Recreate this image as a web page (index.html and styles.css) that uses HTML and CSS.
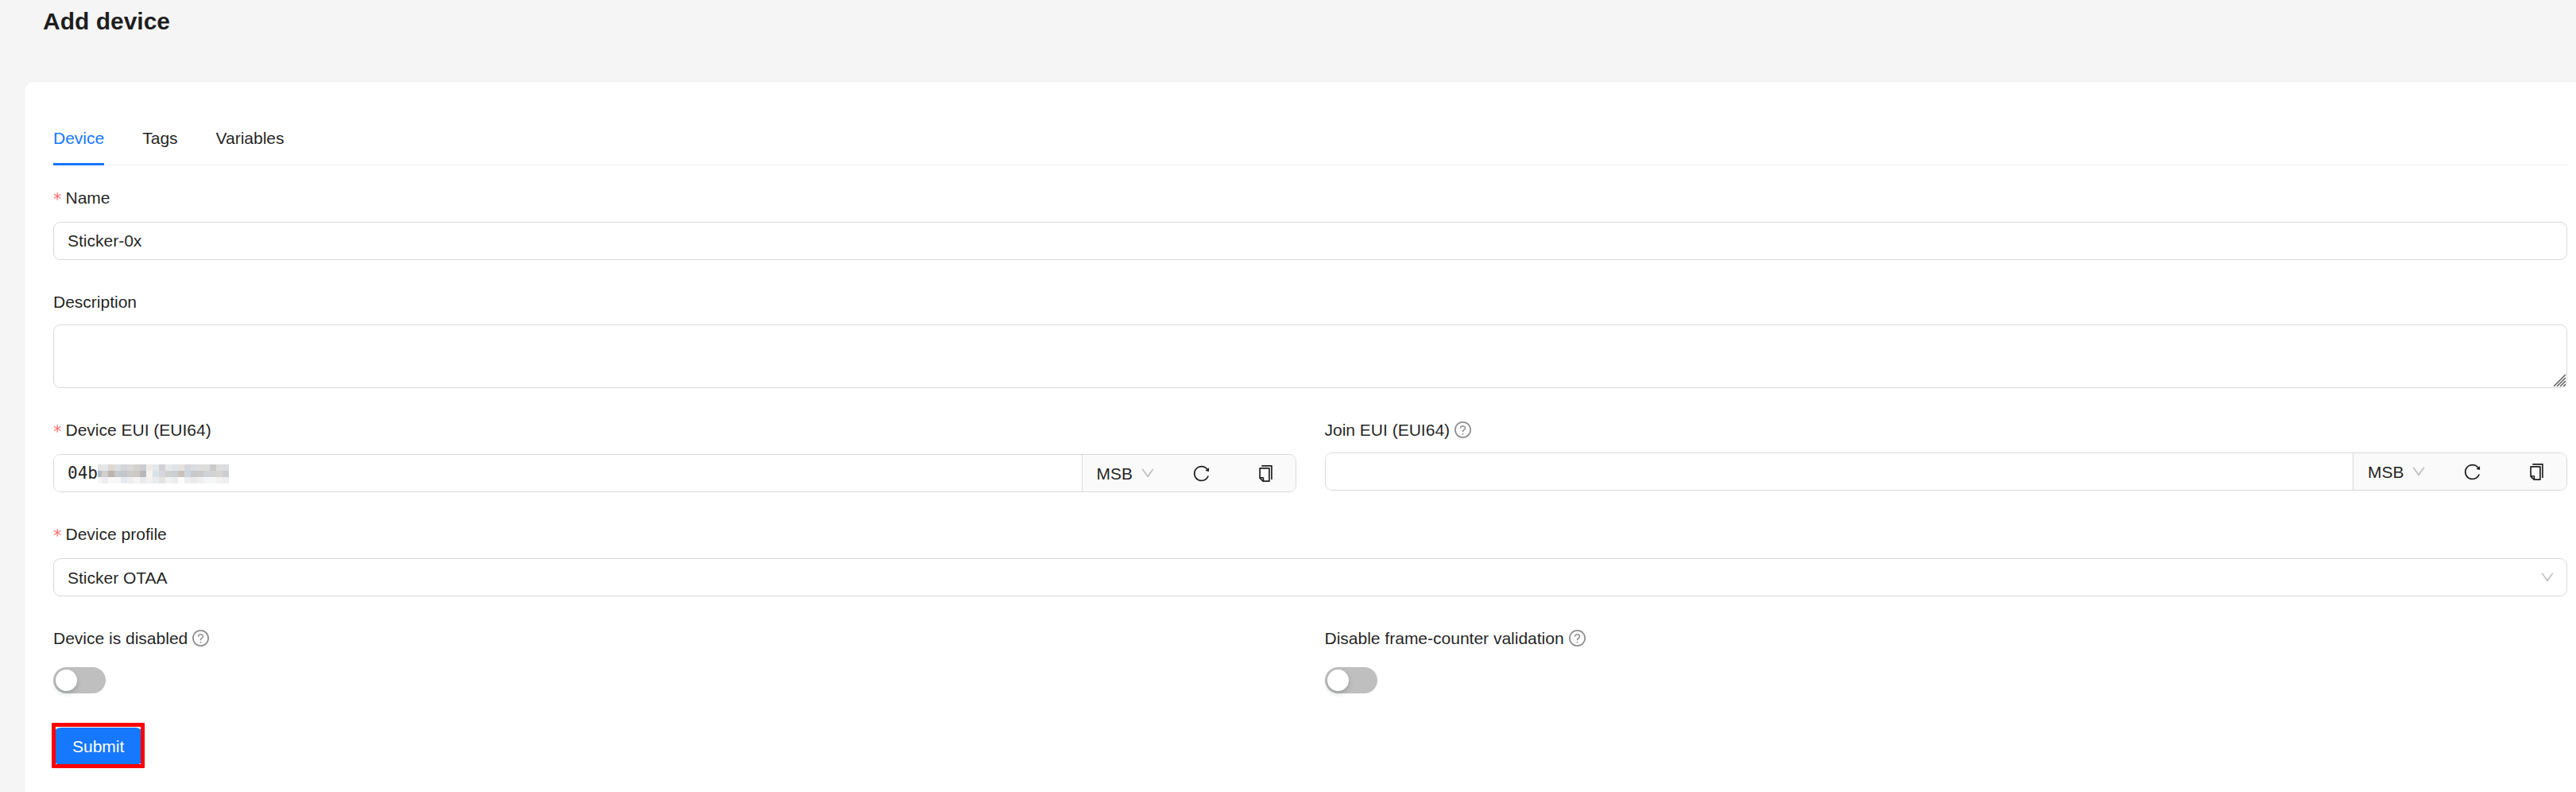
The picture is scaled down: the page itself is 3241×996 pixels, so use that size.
FILE: index.html
```
<!DOCTYPE html>
<html lang="en">
<head>
  <meta charset="UTF-8">
  <meta name="viewport" content="width=device-width, initial-scale=1.0">
  <title>Add device</title>
  <link rel="stylesheet" href="styles.css">
</head>
<body>

  <!-- shared icons -->
  <svg class="sprite" aria-hidden="true">
    <symbol id="icon-question" viewBox="64 64 896 896">
      <path d="M512 64C264.600 64 64 264.600 64 512s200.600 448 448 448 448-200.600 448-448S759.400 64 512 64zm0 820c-205.400 0-372-166.600-372-372s166.600-372 372-372 372 166.600 372 372-166.600 372-372 372z"/>
      <path d="M623.600 316.700C593.600 290.400 554 276 512 276s-81.600 14.500-111.600 40.700C369.200 344 352 380.700 352 420v7.600c0 4.400 3.600 8 8 8h48c4.400 0 8-3.600 8-8V420c0-44.100 43.100-80 96-80s96 35.900 96 80c0 31.100-22 59.600-56.100 72.700-21.200 8.100-39.200 22.300-52.100 40.900-13.100 19-19.900 41.800-19.900 64.900V620c0 4.400 3.600 8 8 8h48c4.400 0 8-3.600 8-8v-22.700a48.300 48.300 0 0 1 30.900-44.800c59-22.700 97.100-74.700 97.100-132.500.1-39.300-17.100-76-48.300-103.300zM472 732a40 40 0 1 0 80 0 40 40 0 1 0-80 0z"/>
    </symbol>
    <symbol id="icon-down" viewBox="64 64 896 896">
      <path d="M884 256h-75c-5.100 0-9.900 2.500-12.900 6.600L512 654.200 227.900 262.600c-3-4.100-7.800-6.600-12.900-6.600h-75c-6.500 0-10.300 7.400-6.500 12.700l352.600 486.100c12.800 17.600 39 17.600 51.700 0l352.600-486.100c3.900-5.300.1-12.700-6.400-12.700z"/>
    </symbol>
    <symbol id="icon-reload" viewBox="64 64 896 896">
      <path d="M909.100 209.300l-56.400 44.100C775.800 155.100 656.200 92 521.900 92 290 92 102.300 279.500 102 511.500 101.700 743.700 289.800 932 521.900 932c181.300 0 335.800-115 394.600-276.100 1.500-4.200-.7-8.900-4.900-10.300l-56.700-19.500a8 8 0 0 0-10.100 4.800c-1.800 5-3.800 10-5.900 14.900-17.300 41-42.100 77.800-73.700 109.400A344.770 344.770 0 0 1 655.900 829c-42.300 17.900-87.400 27-133.800 27-46.500 0-91.500-9.100-133.800-27A341.500 341.500 0 0 1 279 755.200a342.160 342.160 0 0 1-73.700-109.400c-17.900-42.400-27-87.400-27-133.900s9.100-91.500 27-133.900c17.300-41 42.100-77.800 73.700-109.400 31.600-31.600 68.400-56.400 109.300-73.800 42.300-17.900 87.400-27 133.800-27 46.500 0 91.500 9.100 133.800 27a341.500 341.500 0 0 1 109.300 73.800c9.900 9.900 19.200 20.400 27.800 31.400l-60.200 47a8 8 0 0 0 3 14.100l175.600 43c5 1.200 9.900-2.600 9.900-7.700l.8-180.900c-.1-6.600-7.800-10.300-13-6.200z"/>
    </symbol>
    <symbol id="icon-copy" viewBox="64 64 896 896">
      <path d="M832 64H296c-4.400 0-8 3.600-8 8v56c0 4.400 3.600 8 8 8h496v688c0 4.400 3.600 8 8 8h56c4.400 0 8-3.600 8-8V96c0-17.700-14.300-32-32-32zM704 192H192c-17.700 0-32 14.300-32 32v530.700c0 8.500 3.400 16.600 9.400 22.600l173.300 173.300c2.200 2.200 4.700 4 7.400 5.500v1.900h4.200c3.500 1.300 7.200 2 11 2H704c17.700 0 32-14.300 32-32V224c0-17.700-14.300-32-32-32zM350 856.200L263.900 770H350v86.200zM664 888H414V746c0-22.100-17.900-40-40-40H232V264h432v624z"/>
    </symbol>
  </svg>

  <div class="page">
    <h1>Add device</h1>

    <main class="card">
      <nav class="tabs">
        <a href="#device" class="tab active">Device</a>
        <a href="#tags" class="tab">Tags</a>
        <a href="#variables" class="tab">Variables</a>
      </nav>

      <form>
        <div class="form-item">
          <label for="name" class="required">Name</label>
          <input type="text" id="name" class="control" value="Sticker-0x">
        </div>

        <div class="form-item">
          <label for="description">Description</label>
          <div class="textarea">
            <textarea id="description" class="control"></textarea>
            <svg class="grip" viewBox="0 0 15 15" aria-hidden="true">
              <path d="M0 15L15 0M4 15L15 4M8 15L15 8M12 15L15 12"/>
            </svg>
          </div>
        </div>

        <div class="row">
          <div class="form-item">
            <label for="devEui" class="required">Device EUI (EUI64)</label>
            <div class="group">
              <div class="group-field">
                <input type="text" id="devEui" class="mono" value="04b">
                <svg class="mask" viewBox="0 0 165 24" shape-rendering="crispEdges" aria-hidden="true">
                  <g id="maskCells"></g>
                </svg>
              </div>
              <div class="addon">
                <span class="order">
                  <select aria-label="Device EUI byte order"><option>MSB</option><option>LSB</option></select>
                  <svg class="arrow"><use href="#icon-down"/></svg>
                </span>
                <button type="button" class="icon-button" aria-label="Generate"><svg><use href="#icon-reload"/></svg></button>
                <button type="button" class="icon-button" aria-label="Copy"><svg><use href="#icon-copy"/></svg></button>
              </div>
            </div>
          </div>

          <div class="form-item">
            <label for="joinEui">Join EUI (EUI64) <svg class="help"><use href="#icon-question"/></svg></label>
            <div class="group">
              <div class="group-field">
                <input type="text" id="joinEui" class="mono">
              </div>
              <div class="addon">
                <span class="order">
                  <select aria-label="Join EUI byte order"><option>MSB</option><option>LSB</option></select>
                  <svg class="arrow"><use href="#icon-down"/></svg>
                </span>
                <button type="button" class="icon-button" aria-label="Generate"><svg><use href="#icon-reload"/></svg></button>
                <button type="button" class="icon-button" aria-label="Copy"><svg><use href="#icon-copy"/></svg></button>
              </div>
            </div>
          </div>
        </div>

        <div class="form-item">
          <label for="profile" class="required">Device profile</label>
          <div class="select">
            <select id="profile" class="control"><option>Sticker OTAA</option></select>
            <svg class="arrow"><use href="#icon-down"/></svg>
          </div>
        </div>

        <div class="row">
          <div class="form-item">
            <label for="disabled">Device is disabled <svg class="help"><use href="#icon-question"/></svg></label>
            <div class="switch-line"><input type="checkbox" role="switch" id="disabled" class="switch"></div>
          </div>
          <div class="form-item">
            <label for="skipFcnt">Disable frame-counter validation <svg class="help"><use href="#icon-question"/></svg></label>
            <div class="switch-line"><input type="checkbox" role="switch" id="skipFcnt" class="switch"></div>
          </div>
        </div>

        <button type="button" class="submit">Submit</button>
      </form>
    </main>
  </div>

  <script>
    // mosaic that hides the rest of the EUI, first column is narrower
    const rows = [
      "e4e4e4 e5e7e8 ddd7d2 dddee1 d2d5d9 dad9d7 d5d2d0 cccdd1 eeeae7 e3e8eb d0d1d4 e8e8e6 dfe4e8 e5e1de d5d6dc d9dce2 dddddc dddddb cacaca dddfde dcdde0",
      "b4bbc0 d0cfce bdb4b0 c5c8cc c4c7c9 cdcbc8 cdc7c5 b8b8b8 f5f4f0 dae1e6 d6d8dd d1d0ce cacfd1 c8c2bb cfd5df c7c9c8 cbcac8 cfd3d7 d2d2d3 d8d4d1 cdced2",
      "f6f6f5 eceef1 faf8f7 f7f7f8 e8ebee efeeec f5f5f6 e9ebed f3f0ed eaedf0 e4e4e3 f2f2f2 ebedef fdfcfa edeeef e8ebed f2f0ef f5f6f8 f5f6f7 f3f2f1 eeeff2"
    ];
    let cells = "";
    rows.forEach((row, y) => {
      row.split(" ").forEach((color, i) => {
        const x = i === 0 ? 0 : i * 8 - 3;
        cells += `<rect x="${x}" y="${y * 8}" width="${i === 0 ? 5 : 8}" height="8" fill="#${color}"/>`;
      });
    });
    document.getElementById("maskCells").innerHTML = cells;
  </script>

</body>
</html>
```
FILE: styles.css
```
* {
  box-sizing: border-box;
}

body {
  margin: 0;
  font-family: "Liberation Sans", Arial, sans-serif;
  font-size: 21px;
  line-height: 33px;
  color: rgba(0, 0, 0, 0.88);
  background: #f5f5f5;
}

svg {
  fill: currentColor;
}

.sprite {
  display: none;
}

.page {
  display: flex;
  flex-direction: column;
  min-height: 100vh;
  padding-left: 30px;
}

h1 {
  margin: 0;
  padding: 3px 24px 51px;
  font-size: 30px;
  line-height: 48px;
  font-weight: bold;
}

.card {
  flex: 1;
  padding: 36px 11px 24px 36px;
  background: #fff;
  border: 1px solid #f0f0f0;
  border-width: 1px 0 0 1px;
  border-radius: 12px 0 0 0;
}

.tabs {
  display: flex;
  gap: 48px;
  margin-bottom: 24px;
  box-shadow: inset 0 -1px #f0f0f0;
}

.tab {
  padding: 18px 0;
  color: inherit;
  text-decoration: none;
}

.tab.active {
  color: #1677ff;
  box-shadow: inset 0 -3px #1677ff;
}

.row {
  display: grid;
  grid-template-columns: 1fr 1fr;
  gap: 36px;
}

.row .form-item {
  min-width: 0;
}

.form-item {
  margin-bottom: 36px;
}

label {
  display: flex;
  align-items: center;
  margin-bottom: 12px;
}

label.required {
  padding-bottom: 2px;
}

label.required::before {
  content: "*";
  margin-right: 5px;
  padding-top: 6px;
  font-family: "DejaVu Sans", sans-serif;
  line-height: 27px;
  color: #ff7073;
}

.help {
  width: 21px;
  height: 21px;
  margin-left: 6px;
  color: rgba(0, 0, 0, 0.45);
}

input,
textarea,
select,
button {
  margin: 0;
  font: inherit;
  color: inherit;
}

.control {
  display: block;
  width: 100%;
  height: 48px;
  padding: 0 17px;
  background: #fff;
  border: 1px solid #d9d9d9;
  border-radius: 9px;
}

.textarea {
  position: relative;
}

textarea.control {
  height: 80px;
  padding: 6px 17px;
  resize: none;
}

/* corner handle, drawn over the textarea */
.grip {
  position: absolute;
  right: 2px;
  bottom: 2px;
  width: 15px;
  height: 15px;
  fill: none;
  stroke: #555;
  stroke-width: 1.4;
  pointer-events: none;
}

select {
  appearance: none;
}

.select {
  display: grid;
  align-items: center;
}

.select > * {
  grid-area: 1 / 1;
}

.select .arrow {
  justify-self: end;
  margin-right: 16px;
}

.arrow {
  width: 18px;
  height: 18px;
  color: rgba(0, 0, 0, 0.25);
  pointer-events: none;
}

.group {
  display: flex;
  height: 48px;
  border: 1px solid #d9d9d9;
  border-radius: 9px;
  overflow: hidden;
}

.group-field {
  position: relative;
  flex: 1;
}

.mono {
  width: 100%;
  height: 100%;
  padding: 0 17px;
  border: 0;
  background: #fff;
  font-family: "DejaVu Sans Mono", monospace;
}

/* sits over the hidden characters of the field */
.mask {
  position: absolute;
  left: 55px;
  top: 12px;
  width: 165px;
  height: 24px;
}

.addon {
  display: flex;
  align-items: center;
  width: 269px;
  padding-left: 18px;
  background: #fafafa;
  border-left: 1px solid #d9d9d9;
}

.order {
  display: flex;
  align-items: center;
  gap: 9px;
  margin-right: 6px;
}

.order select {
  padding: 0;
  border: 0;
  background: none;
}

.icon-button {
  display: flex;
  padding: 0 18px;
  margin-left: 24px;
  border: 0;
  background: none;
  cursor: pointer;
}

.icon-button svg {
  width: 21px;
  height: 21px;
}

.switch-line {
  display: flex;
  align-items: center;
  height: 48px;
}

.switch {
  appearance: none;
  width: 66px;
  height: 33px;
  padding: 3px;
  border-radius: 17px;
  background: #bfbfbf;
  cursor: pointer;
}

.switch::before {
  content: "";
  display: block;
  width: 27px;
  height: 27px;
  border-radius: 50%;
  background: #fff;
  box-shadow: 0 3px 6px rgba(0, 35, 11, 0.2);
}

.switch:checked {
  background: #1677ff;
}

.switch:checked::before {
  margin-left: 33px;
}

.submit {
  position: relative;
  display: block;
  height: 47px;
  padding: 0 24px;
  border: 0;
  border-radius: 9px;
  background: #1677ff;
  color: #fff;
  cursor: pointer;
}

/* red highlight frame over the button */
.submit::after {
  content: "";
  position: absolute;
  inset: -6px -2px -4px;
  border: 5px solid #f00;
  border-radius: 1px;
}
```
